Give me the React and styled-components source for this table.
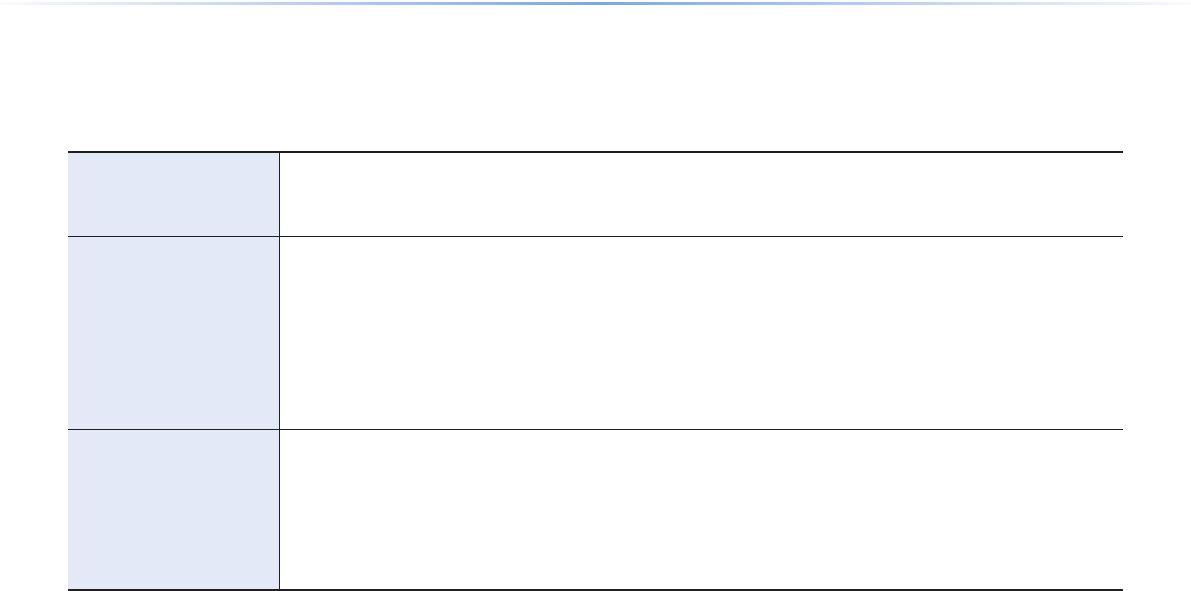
import styled, { createGlobalStyle } from 'styled-components';

const GlobalStyle = createGlobalStyle`
  body {
    margin: 0;
    background: #ffffff;
    font-family: "Liberation Sans", Arial, sans-serif;
  }
`

const Page = styled.div`
  width: 1191px;
  height: 591px;
  overflow: hidden;
  padding-top: 2px;
  box-sizing: border-box;
`

const TopRule = styled.div`
  height: 3px;
  background: linear-gradient(to right, rgba(126,166,223,0.05) 0%, #7ea6df 50%, rgba(126,166,223,0.05) 100%);
`

const Table = styled.div`
  margin: 146px 0 0 68px;
  width: 1055px;
  display: grid;
  grid-template-columns: 212px 1fr;
  border-top: 2px solid #231f20;
  border-bottom: 2px solid #231f20;
`

const Label = styled.div`
  height: ${props => props.h}px;
  background: #e3e9f6;
  border-right: 1px solid #231f20;
  border-bottom: ${props => props.last ? 'none' : '1px solid #231f20'};
`

const Value = styled.div`
  height: ${props => props.h}px;
  border-bottom: ${props => props.last ? 'none' : '1px solid #231f20'};
`

const rows = [83, 192, 159]

function App() {
  return (
    <Page>
      <GlobalStyle />
      <TopRule />
      <Table>
        {rows.map((h, i) => (
          <>
            <Label key={'l' + i} h={h} last={i == rows.length - 1} />
            <Value key={'v' + i} h={h} last={i == rows.length - 1} />
          </>
        ))}
      </Table>
    </Page>
  )
}

export default App;
